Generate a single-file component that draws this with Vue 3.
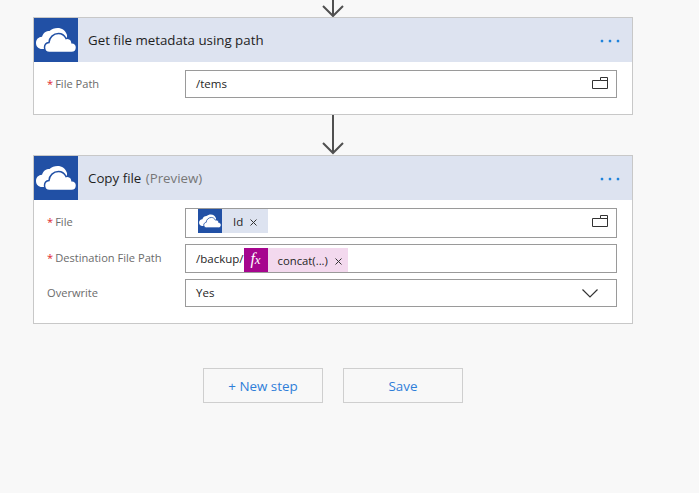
<script setup>
const arrowLong = 'M11 0V38'
const cloudBack = 'M8 31C4.500 31 2 28.500 2 25C2 21.500 4.500 19 8 18.800C9.500 14.500 12 13 15.500 13C17.500 11 20.500 10 23.500 10C28 10 31.500 12.500 33 17L33 31Z'
const cloudFront = 'M15.500 34.500C12.500 34.500 10.500 32.300 10.500 29.500C10.500 26.700 12.500 24.800 15 24.500C15.200 19.500 19.500 15.500 24.500 15.500C28 15.500 30.500 17.500 32 20.500C33 20.200 34.500 20.300 35.500 20.800C37 21.500 38 23 38 24.800C40.500 25 42.500 26.900 42.500 29.500C42.500 32.300 40.500 34.500 37.500 34.500Z'
const folder = 'M.5 3.500H8.500V.5H15.500V11.500H.5Z M8.500 3.500H15.500'
const cross = 'M.5 .5L6.500 6.500M6.500 .5L.5 6.500'
</script>

<template>
  <div class="flow">
    <div class="connector connector-top">
      <svg width="22" height="17" viewBox="0 22 22 17"><path :d="arrowLong" class="arrow" /><path d="M1 28L11 38L21 28" class="arrow" /></svg>
    </div>

    <section class="card">
      <header class="card-head">
        <span class="brand">
          <svg width="44" height="44" viewBox="0 0 44 44">
            <path class="cloud-back" :d="cloudBack" />
            <path class="cloud-front" :d="cloudFront" />
          </svg>
        </span>
        <h2 class="card-title">Get file metadata using path</h2>
        <span class="dots"><i></i><i></i><i></i></span>
      </header>
      <div class="card-body">
        <div class="field">
          <label class="field-label"><em>*</em>File Path</label>
          <div class="input input-28">
            <span class="value">/tems</span>
            <svg class="end-icon folder-up" width="16" height="12" viewBox="0 0 16 12"><path :d="folder" class="folder" /></svg>
          </div>
        </div>
      </div>
    </section>

    <div class="connector">
      <svg width="22" height="40" viewBox="0 0 22 40"><path :d="arrowLong" class="arrow" /><path d="M1 28L11 38L21 28" class="arrow" /></svg>
    </div>

    <section class="card">
      <header class="card-head">
        <span class="brand">
          <svg width="44" height="44" viewBox="0 0 44 44">
            <path class="cloud-back" :d="cloudBack" />
            <path class="cloud-front" :d="cloudFront" />
          </svg>
        </span>
        <h2 class="card-title">Copy file <span class="muted">(Preview)</span></h2>
        <span class="dots"><i></i><i></i><i></i></span>
      </header>
      <div class="card-body">
        <div class="field">
          <label class="field-label"><em>*</em>File</label>
          <div class="input input-30 input-token">
            <span class="token token-drive">
              <span class="token-icon">
                <svg width="24" height="24" viewBox="0 0 44 44">
                  <path class="cloud-back" :d="cloudBack" />
                  <path class="cloud-front" :d="cloudFront" />
                </svg>
              </span>
              <span class="token-text">Id</span>
              <svg class="token-x" width="7" height="7" viewBox="0 0 7 7"><path :d="cross" /></svg>
            </span>
            <svg class="end-icon" width="16" height="12" viewBox="0 0 16 12"><path :d="folder" class="folder" /></svg>
          </div>
        </div>
        <div class="field">
          <label class="field-label"><em>*</em>Destination File Path</label>
          <div class="input input-29 input-expr">
            <span class="value">/backup/</span>
            <span class="token token-fx">
              <span class="token-icon fx-icon">f<small>x</small></span>
              <span class="token-text">concat(...)</span>
              <svg class="token-x" width="7" height="7" viewBox="0 0 7 7"><path :d="cross" /></svg>
            </span>
          </div>
        </div>
        <div class="field">
          <label class="field-label">Overwrite</label>
          <div class="input input-28">
            <span class="value">Yes</span>
            <svg class="end-icon chevron" width="16" height="9" viewBox="0 0 16 9"><path d="M.5 .5L8 8L15.500 .5" /></svg>
          </div>
        </div>
      </div>
    </section>

    <div class="actions">
      <button class="btn" type="button">+ New step</button>
      <button class="btn" type="button">Save</button>
    </div>
  </div>
</template>

<style scoped>
.flow {
  width: 699px;
  height: 493px;
  overflow: hidden;
  background: #f8f8f8;
  padding-left: 33px;
  box-sizing: border-box;
  font-family: "Open Sans", "Noto Sans", sans-serif;
  font-size: 11.5px;
  color: #252525;
}

.connector {
  width: 600px;
  height: 40px;
  display: flex;
  justify-content: center;
}

.connector svg {
  display: block;
}

.connector-top {
  height: 17px;
}

.arrow {
  fill: none;
  stroke: #505050;
  stroke-width: 2;
}

.card {
  width: 600px;
  box-sizing: border-box;
  background: #fff;
  border: 1px solid #c8c8c8;
}

.card-head {
  height: 44px;
  display: flex;
  align-items: center;
  background: #dde3f0;
}

.brand {
  width: 44px;
  height: 44px;
  flex: none;
  background: #2150a5;
}

.brand svg {
  display: block;
}

.cloud-back {
  fill: #fff;
}

.cloud-front {
  fill: #fff;
  stroke: #2150a5;
  stroke-width: 1.500;
}

.card-title {
  flex: 1;
  margin: 0 0 0 10px;
  font-size: 13.300px;
  font-weight: 400;
  color: #1f1f1f;
}

.muted {
  margin-left: 1px;
  color: #777;
}

.dots {
  display: flex;
  gap: 6px;
  margin-right: 13px;
  padding-top: 1px;
}

.dots i {
  width: 2px;
  height: 2px;
  border-radius: 50%;
  background: #0a78d8;
  box-shadow: 0 0 0 .5px rgba(10, 120, 216, .6);
}

.card-body {
  display: flex;
  flex-direction: column;
  gap: 6px;
  padding: 8px 15px 16px 13px;
}

.field {
  display: flex;
  align-items: flex-start;
}

.field-label {
  width: 138px;
  flex: none;
  font-size: 11.100px;
  color: #6b6b6b;
  line-height: 28px;
}

.field-label em {
  color: #e0282e;
  font-style: normal;
  margin-right: 2px;
}

.input {
  flex: 1;
  box-sizing: border-box;
  display: flex;
  align-items: center;
  padding: 0 8px 0 10px;
  border: 1px solid #9a9a9a;
  background: #fff;
}

.input-28 {
  height: 28px;
  line-height: 24px;
}

.input-30 {
  height: 30px;
}

.input-29 {
  height: 29px;
}

.input-28 .value {
  margin-top: -1px;
}

.input-token {
  align-items: flex-start;
  padding-left: 12px;
}

.input-expr {
  align-items: flex-start;
  padding-top: 3px;
}

.input-expr .value {
  line-height: 21px;
}

.end-icon {
  margin-left: auto;
}

.folder-up {
  margin-bottom: 2px;
}

.folder {
  fill: none;
  stroke: #333;
  stroke-width: 1;
}

.chevron {
  margin-right: 10px;
}

.chevron path {
  fill: none;
  stroke: #333;
  stroke-width: 1.200;
}

.input-token .end-icon {
  margin-top: 6px;
}

.token {
  height: 24px;
  display: inline-flex;
  align-items: center;
}

.token-drive {
  background: #dde3f0;
  padding-right: 11px;
}

.token-fx {
  background: #f3d9ee;
  padding-right: 6px;
}

.token-icon {
  width: 24px;
  height: 24px;
  flex: none;
  background: #2150a5;
}

.token-icon svg {
  display: block;
}

.fx-icon {
  background: #a6058e;
  color: #fff;
  text-align: center;
  font-family: "Liberation Serif", serif;
  font-style: italic;
  font-size: 16px;
  line-height: 22px;
}

.fx-icon small {
  font-size: 13px;
}

.token-text {
  margin: 0 7px 0 11px;
}

.token-fx .token-text {
  margin: 0 7px 0 10px;
  font-size: 11.300px;
}

.token-x path {
  fill: none;
  stroke: #333;
  stroke-width: 1;
}

.token-x {
  margin-top: 2px;
}

.actions {
  display: flex;
  gap: 20px;
  margin: 44px 0 0 170px;
}

.btn {
  width: 120px;
  height: 35px;
  padding: 0;
  background: transparent;
  border: 1px solid #cfcfcf;
  color: #2f7ed8;
  font-family: inherit;
  font-size: 13.400px;
}
</style>
